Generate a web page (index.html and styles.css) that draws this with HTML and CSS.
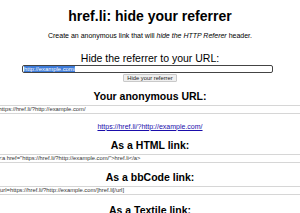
FILE: index.html
```html
<!DOCTYPE html>
<html lang="en">
<head>
  <meta charset="UTF-8">
  <meta name="viewport" content="width=device-width, initial-scale=1.0">
  <title>href.li: hide your referrer</title>
  <link rel="stylesheet" href="styles.css">
</head>
<body>
  <h1>href.li: hide your referrer</h1>
  <p class="intro">Create an anonymous link that will <em>hide the HTTP Referer</em> header.</p>

  <form class="hide-form" onsubmit="return false">
    <label class="prompt" for="url">Hide the referrer to your URL:</label>
    <input id="url" class="url-input" type="text" value="http://example.com/">
    <button class="btn" type="submit">Hide your referrer</button>
  </form>

  <h2>Your anonymous URL:</h2>
  <input class="output" type="text" readonly value="https://href.li/?http://example.com/">
  <p class="result-link"><a href="https://href.li/?http://example.com/">https://href.li/?http://example.com/</a></p>

  <h2>As a HTML link:</h2>
  <input class="output" type="text" readonly value='<a href="https://href.li/?http://example.com/">href.li</a>'>

  <h2>As a bbCode link:</h2>
  <input class="output" type="text" readonly value="[url=https://href.li/?http://example.com/]href.li[/url]">

  <h2>As a Textile link:</h2>
  <input class="output" type="text" readonly value='"href.li":https://href.li/?http://example.com/'>

  <script>
    // keep the url selected so it can be replaced straight away
    var urlInput = document.getElementById('url');
    urlInput.focus();
    urlInput.select();
  </script>
</body>
</html>
```

FILE: styles.css
```css
html {
  overflow: hidden;
}

body {
  font-family: "Liberation Sans", Arial, sans-serif;
  font-size: 7px;
  color: #000;
  background-color: #fff;
  text-align: center;
  margin: 0;
}

h1 {
  font-size: 14px;
  line-height: 16px;
  margin: 7.5px 0 8px;
}

h2 {
  font-size: 10.5px;
  line-height: 12px;
  margin: 8.6px 0 2.6px;
}

.intro {
  line-height: 8px;
  margin: 0;
}

.hide-form {
  margin: 0;
}

.prompt {
  display: block;
  font-size: 10.5px;
  line-height: 12px;
  margin: 12.8px 0 1px;
}

.url-input {
  display: block;
  box-sizing: border-box;
  width: 251px;
  height: 8px;
  margin: 0 0 0 22px;
  padding: 0 1px;
  font-family: "Liberation Sans", Arial, sans-serif;
  font-size: 5.9px;
  color: #000;
  border: 1px solid #444;
  border-radius: 2px;
}

.url-input:focus {
  outline: none;
}

.url-input::selection {
  background-color: #3d7bd9;
  color: #fff;
}

.btn {
  box-sizing: border-box;
  height: 7.5px;
  margin-top: 1px;
  padding: 0 3px;
  font-family: "Liberation Sans", Arial, sans-serif;
  font-size: 5.8px;
  line-height: 5px;
  color: #222;
  background-color: #efefef;
  border: 1px solid #c9c9c9;
  border-radius: 1px;
  cursor: pointer;
}

.output {
  display: block;
  box-sizing: border-box;
  width: calc(100% + 8px);
  height: 9px;
  margin: 0 -4px;
  padding: 0 1.5px;
  font-family: "Liberation Sans", Arial, sans-serif;
  font-size: 5.8px;
  color: #333;
  background-color: #fff;
  border: 1px solid #d6d6d6;
  border-radius: 0;
}

.result-link {
  line-height: 8px;
  margin: 8.6px 0 0;
}

.result-link a {
  color: #1a0dab;
}
```
